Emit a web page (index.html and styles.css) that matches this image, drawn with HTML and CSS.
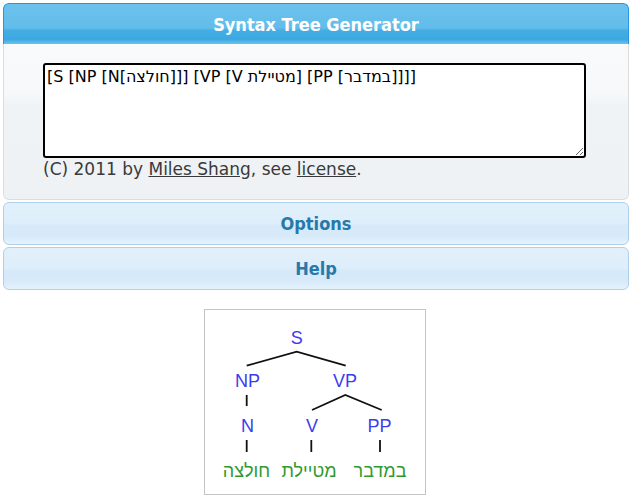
FILE: index.html
```html
<!DOCTYPE html>
<html lang="en">
<head>
<meta charset="utf-8">
<title>Syntax Tree Generator</title>
<link rel="stylesheet" href="styles.css">
</head>
<body>
<div class="accordion">
  <h3 class="acc-header acc-active">Syntax Tree Generator</h3>
  <div class="acc-content">
    <textarea class="phrase" spellcheck="false">[S [NP [N[חולצה]]] [VP [V מטיילת] [PP [במדבר]]]]</textarea>
    <p class="credit">(C) 2011 by <a href="#">Miles Shang</a>, see <a href="#">license</a>.</p>
  </div>
  <h3 class="acc-header acc-default">Options</h3>
  <h3 class="acc-header acc-default">Help</h3>
</div>
<div class="tree-wrap">
  <div class="tree-box">
    <svg class="tree" width="220" height="184" viewBox="0 0 220 184">
      <g class="edges">
        <polyline points="41.7,55.7 91.7,41.7 140.7,55.7"/>
        <line x1="41.7" y1="85" x2="41.7" y2="96"/>
        <polyline points="107,100 140.3,85 176.7,100"/>
        <line x1="41.7" y1="130" x2="41.7" y2="142"/>
        <line x1="106.3" y1="130" x2="106.3" y2="142"/>
        <line x1="175" y1="130" x2="175" y2="142"/>
      </g>
      <g class="labels">
        <text x="91.7" y="34">S</text>
        <text x="42.5" y="77">NP</text>
        <text x="140" y="77">VP</text>
        <text x="42.5" y="122">N</text>
        <text x="107" y="122">V</text>
        <text x="174.5" y="122">PP</text>
      </g>
      <g class="words">
        <text x="41.5" y="167">חולצה</text>
        <text x="104" y="167">מטיילת</text>
        <text x="175" y="167">במדבר</text>
      </g>
    </svg>
  </div>
</div>
</body>
</html>
```
FILE: styles.css
```css
html, body {
  margin: 0;
  padding: 0;
  background: #ffffff;
}
body {
  padding: 3px 5px 0 3px;
  font-family: "DejaVu Sans", sans-serif;
}
.accordion {
  display: flex;
  flex-direction: column;
  gap: 2px;
}
.acc-header {
  margin: 0;
  height: 41px;
  display: flex;
  align-items: center;
  justify-content: center;
  font-family: "Liberation Sans Narrow", "DejaVu Sans Condensed", sans-serif;
  font-weight: bold;
  font-size: 18px;
  box-sizing: border-box;
}
.acc-active {
  color: #ffffff;
  border: 1px solid #2694e8;
  border-bottom: none;
  border-radius: 6px 6px 0 0;
  background: linear-gradient(to bottom, #6cc2ec 0%, #62bdea 60%, #45ade4 66%, #3ba8e2 88%, #6cc3ed 100%);
  padding-top: 1px;
}
.acc-default {
  color: #2779aa;
  height: 43px;
  border: 1px solid #aed0ea;
  border-radius: 6px;
  background: linear-gradient(to bottom, #e2f0fb 0%, #ddeefa 50%, #d5e9f8 56%, #d7eaf9 80%, #e4f2fc 100%);
}
.acc-content {
  margin-top: -2px;
  border: 1px solid #dddddd;
  border-top: none;
  border-radius: 0 0 6px 6px;
  background: linear-gradient(to bottom, #f9fafb 0px, #f6f8fa 50px, #eff3f6 62px, #eef2f5 100%);
  padding: 19px 39px 18px 39px;
}
.phrase {
  display: block;
  box-sizing: border-box;
  width: 543px;
  height: 95px;
  margin: 0;
  padding: 1px 2px;
  border: 2px solid #000000;
  border-radius: 3px;
  background: #ffffff;
  color: #000000;
  font-family: "DejaVu Sans", sans-serif;
  font-size: 16px;
  line-height: 22px;
  resize: both;
  outline: none;
}
.credit {
  margin: 0;
  height: 23px;
  line-height: 23px;
  font-family: "DejaVu Sans", sans-serif;
  font-size: 17px;
  color: #3a3a3a;
}
.credit a {
  color: #3a3a3a;
  text-decoration: underline;
}
.tree-wrap {
  display: flex;
  justify-content: center;
  padding: 19px 2px 0 0;
}
.tree-box {
  border: 1px solid #c4c4c4;
  background: #ffffff;
  width: 220px;
  height: 184px;
}
.tree {
  display: block;
}
.edges polyline, .edges line {
  fill: none;
  stroke: #111111;
  stroke-width: 1.8;
}
.labels text {
  font-family: "Liberation Sans", Arial, sans-serif;
  font-size: 18px;
  fill: #3b3bf0;
  text-anchor: middle;
}
.words text {
  font-family: "Liberation Sans", "DejaVu Sans", sans-serif;
  font-size: 18px;
  fill: #2f9a2f;
  text-anchor: middle;
  direction: rtl;
}
```
